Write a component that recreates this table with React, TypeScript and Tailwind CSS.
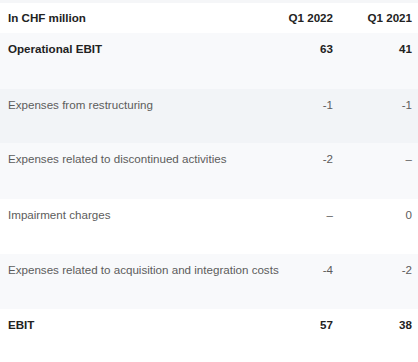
const rows = [
  { label: 'Operational EBIT', a: '63', b: '41', bold: true, bg: 'bg-[#f8f9fb]', h: 'h-[56px]' },
  { label: 'Expenses from restructuring', a: '-1', b: '-1', bold: false, bg: 'bg-[#f2f4f7]', h: 'h-[54px]' },
  { label: 'Expenses related to discontinued activities', a: '-2', b: '–', bold: false, bg: 'bg-[#f8f9fb]', h: 'h-[56px]' },
  { label: 'Impairment charges', a: '–', b: '0', bold: false, bg: 'bg-white', h: 'h-[55px]' },
  { label: 'Expenses related to acquisition and integration costs', a: '-4', b: '-2', bold: false, bg: 'bg-[#f8f9fb]', h: 'h-[55px]' },
  { label: 'EBIT', a: '57', b: '38', bold: true, bg: 'bg-white', h: 'h-[56px]' },
]

export default function App() {
  return (
    <div
      className="w-[418px] h-[362px] overflow-hidden bg-white text-[11.6px] leading-[14px]"
      style={{ fontFamily: '"Liberation Sans", Arial, sans-serif' }}
    >
      <div className="h-[3px] bg-[#f5f6f8]" />

      {/* Header */}
      <div className="grid grid-cols-[minmax(0,1fr)_70px_79px] items-center h-[30px] pl-2 pr-[6px] font-bold text-[#222]">
        <span>In CHF million</span>
        <span className="text-right">Q1 2022</span>
        <span className="text-right">Q1 2021</span>
      </div>

      {/* Rows */}
      {rows.map((r) => (
        <div
          key={r.label}
          className={`grid grid-cols-[minmax(0,1fr)_70px_79px] pt-[9px] pl-2 pr-[6px] ${r.h} ${r.bg} ${
            r.bold ? 'font-bold text-[#222]' : 'text-[#5c5c5c]'
          }`}
        >
          <span className="whitespace-nowrap">{r.label}</span>
          <span className="text-right">{r.a}</span>
          <span className="text-right">{r.b}</span>
        </div>
      ))}
    </div>
  )
}
